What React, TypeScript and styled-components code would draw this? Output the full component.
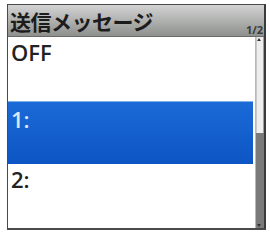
import React from 'react';
import styled, { createGlobalStyle } from 'styled-components';

const GlobalStyle = createGlobalStyle`
  html, body {
    margin: 0;
    padding: 0;
    background: #ffffff;
  }
`;

const Page = styled.div`
  width: 270px;
  height: 234px;
  padding: 4px 4px 4px 7px;
  box-sizing: border-box;
  background: #ffffff;
`;

const Screen = styled.div`
  width: 259px;
  height: 226px;
  box-sizing: border-box;
  border: 1px solid #4a4a4a;
  border-right: 2px solid #3a3a3a;
  border-bottom: 2px solid #4a4a4a;
  display: flex;
  flex-direction: column;
  font-family: 'Open Sans', 'Noto Sans', 'Noto Sans CJK JP', sans-serif;
`;

const Header = styled.div`
  height: 32px;
  flex-shrink: 0;
  display: flex;
  align-items: flex-end;
  justify-content: space-between;
  background: linear-gradient(#d2d3d2, #8e908e);
  border-bottom: 1px solid #6a6a6a;
  box-sizing: border-box;
`;

const Title = styled.div`
  font-family: 'Noto Sans CJK JP', sans-serif;
  font-weight: 700;
  font-size: 21px;
  line-height: 30px;
  color: #1c1c1c;
  padding-left: 2px;
  align-self: center;
  letter-spacing: -0.5px;
`;

const Page12 = styled.div`
  font-size: 11px;
  font-weight: 700;
  color: #3a3a3a;
  line-height: 12px;
  padding-right: 1px;
`;

const Body = styled.div`
  flex: 1;
  display: flex;
  min-height: 0;
`;

const List = styled.div`
  flex: 1;
  display: flex;
  flex-direction: column;
`;

const Row = styled.div<{ $selected?: boolean }>`
  height: 64px;
  box-sizing: border-box;
  padding: 1px 0 0 3px;
  font-size: 22px;
  font-weight: 600;
  line-height: 28px;
  color: ${(p) => (p.$selected ? '#dbe6f7' : '#222222')};
  background: ${(p) =>
    p.$selected ? 'linear-gradient(#1a6ad8, #0d55c4)' : '#ffffff'};
  border-top: ${(p) => (p.$selected ? '1px solid #7fb0ea' : 'none')};
  ${(p) => (p.$selected ? 'margin-right: 2px; padding-top: 3px;' : '')}
`;

const Scrollbar = styled.div`
  width: 8px;
  flex-shrink: 0;
  display: flex;
  flex-direction: column;
  background: #e9e9e9;
  border-left: 1px solid #b9b9b9;
  position: relative;
`;

const Thumb = styled.div`
  height: 96px;
  background: #eeeeee;
  border-left: 1px solid #c8c8c8;
  border-right: 1px solid #a0a0a0;
  box-sizing: border-box;
`;

const Track = styled.div`
  flex: 1;
  background: #7a7a7a;
`;

const Arrow = styled.div<{ $down?: boolean }>`
  position: absolute;
  left: 1px;
  ${(p) => (p.$down ? 'bottom: 1px;' : 'top: 1px;')}
  width: 0;
  height: 0;
  border-left: 2.5px solid transparent;
  border-right: 2.5px solid transparent;
  ${(p) =>
    p.$down ? 'border-top: 3px solid #333;' : 'border-bottom: 3px solid #333;'}
`;

export default function App() {
  return (
    <>
      <GlobalStyle />
      <Page>
        <Screen>
          <Header>
            <Title>送信メッセージ</Title>
            <Page12>1/2</Page12>
          </Header>
          <Body>
            <List>
              <Row>OFF</Row>
              <Row $selected>1:</Row>
              <Row>2:</Row>
            </List>
            <Scrollbar>
              <Arrow />
              <Thumb />
              <Track />
              <Arrow $down />
            </Scrollbar>
          </Body>
        </Screen>
      </Page>
    </>
  );
}
